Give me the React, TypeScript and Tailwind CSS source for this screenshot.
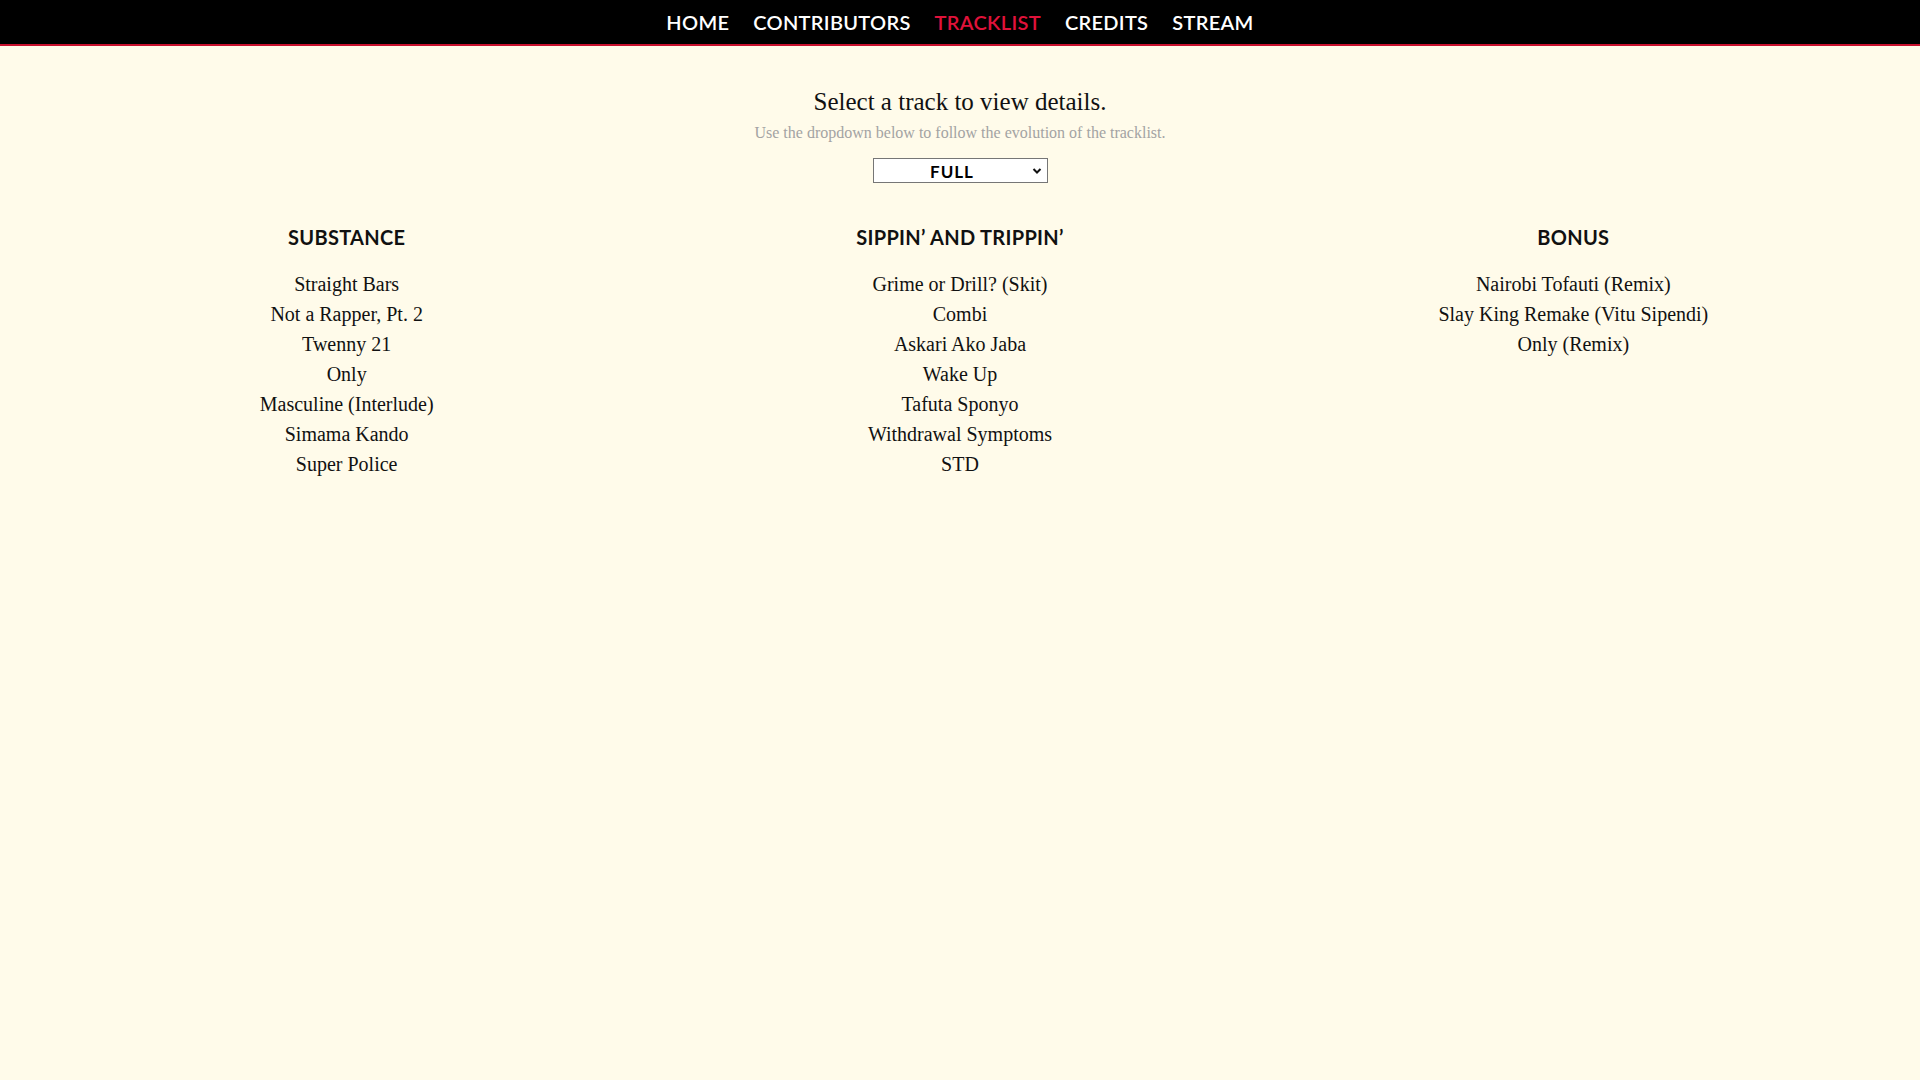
import { useState } from "react";

const NAV = ["HOME", "CONTRIBUTORS", "TRACKLIST", "CREDITS", "STREAM"];

const SECTIONS: { title: string; tracks: string[] }[] = [
  {
    title: "SUBSTANCE",
    tracks: [
      "Straight Bars",
      "Not a Rapper, Pt. 2",
      "Twenny 21",
      "Only",
      "Masculine (Interlude)",
      "Simama Kando",
      "Super Police",
    ],
  },
  {
    title: "SIPPIN’ AND TRIPPIN’",
    tracks: [
      "Grime or Drill? (Skit)",
      "Combi",
      "Askari Ako Jaba",
      "Wake Up",
      "Tafuta Sponyo",
      "Withdrawal Symptoms",
      "STD",
    ],
  },
  {
    title: "BONUS",
    tracks: ["Nairobi Tofauti (Remix)", "Slay King Remake (Vitu Sipendi)", "Only (Remix)"],
  },
];

const sans = "font-['Lato','Open_Sans',sans-serif]";
const serif = "font-['Liberation_Serif','DejaVu_Serif',serif]";

export default function App() {
  const [version, setVersion] = useState("FULL");

  return (
    <div className="min-h-screen bg-[#fffbea] text-[#111]">
      <nav className="h-[46px] bg-black border-b-2 border-[#c8102e] flex items-center justify-center gap-[24px]">
        {NAV.map((item) => (
          <a
            key={item}
            className={`${sans} text-[20px] font-semibold tracking-[0.3px] ${
              item === "TRACKLIST" ? "text-[#e0123a]" : "text-white"
            }`}
          >
            {item}
          </a>
        ))}
      </nav>

      <div className="flex flex-col items-center pt-[39px]">
        <h1 className={`${serif} text-[25px] leading-[34px]`}>Select a track to view details.</h1>
        <p className={`${serif} text-[16px] leading-[20px] text-[#a3a3a3] mt-[4px]`}>
          Use the dropdown below to follow the evolution of the tracklist.
        </p>
        <div className="relative mt-[15px]">
          <select
            value={version}
            onChange={(e) => setVersion(e.target.value)}
            className={`${sans} appearance-none w-[175px] h-[25px] bg-white border border-[#767676] text-[17px] font-bold text-center text-black tracking-[1px] pr-4`}
          >
            <option value="FULL">FULL</option>
            <option value="ORIGINAL">ORIGINAL</option>
            <option value="DELUXE">DELUXE</option>
          </select>
          <svg
            className="absolute right-[6px] top-[9px] pointer-events-none"
            width="10"
            height="8"
            viewBox="0 0 10 8"
          >
            <path d="M1.5 2 L5 5.5 L8.5 2" fill="none" stroke="#111" strokeWidth="2" />
          </svg>
        </div>
      </div>

      <div className="grid grid-cols-3 px-[40px] mt-[41px]">
        {SECTIONS.map((s) => (
          <div key={s.title} className="flex flex-col items-center">
            <h2 className={`${sans} text-[20px] font-bold leading-[24px] tracking-[0.3px]`}>{s.title}</h2>
            <ul className="mt-[20px] flex flex-col items-center">
              {s.tracks.map((t) => (
                <li key={t} className={`${serif} text-[20px] leading-[30px] cursor-pointer`}>
                  {t}
                </li>
              ))}
            </ul>
          </div>
        ))}
      </div>
    </div>
  );
}
